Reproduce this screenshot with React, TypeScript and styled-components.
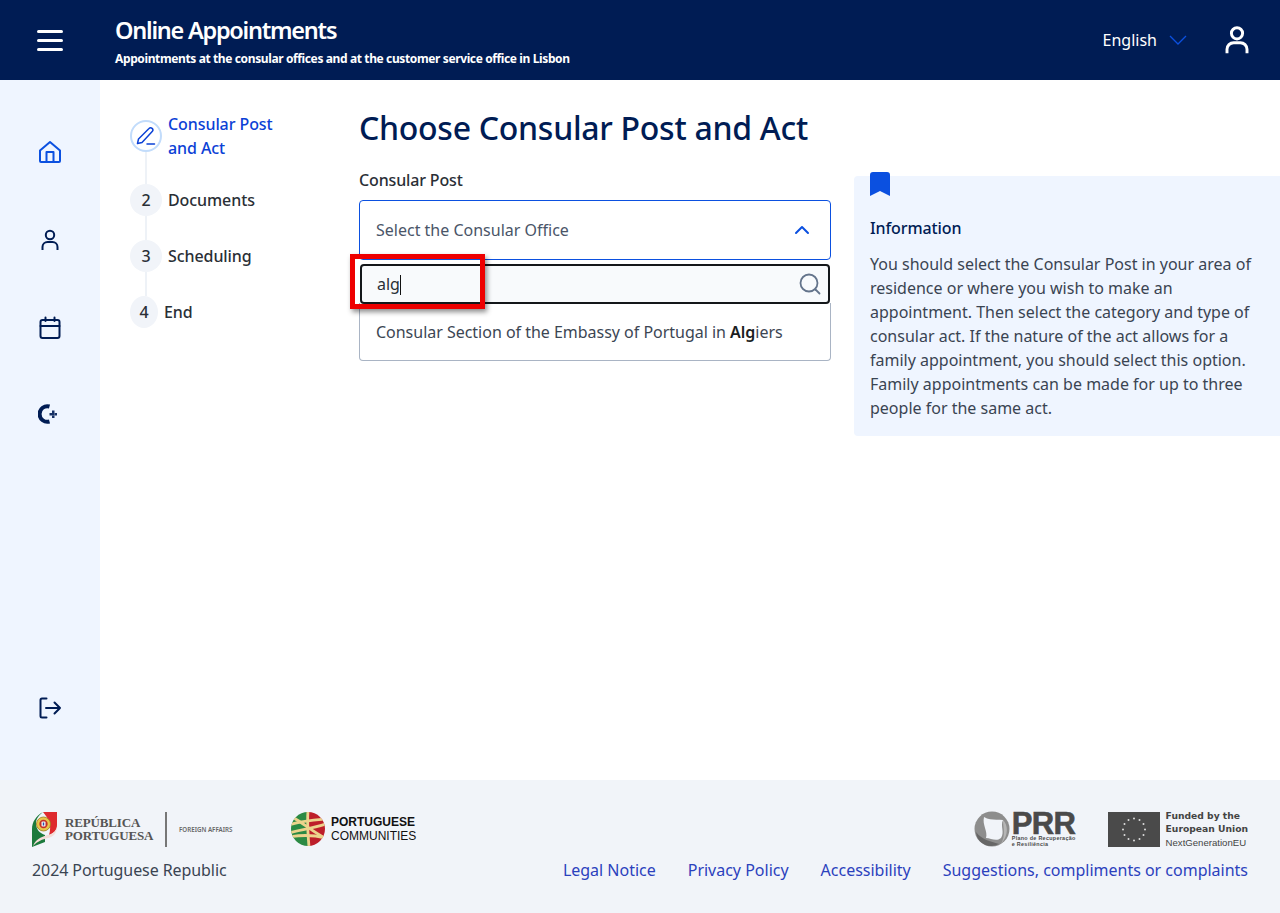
import React from 'react';
import styled, { createGlobalStyle } from 'styled-components';

const GlobalStyle = createGlobalStyle`
	html, body {
		margin: 0;
		padding: 0;
		background: #fff;
	}
	body {
		font-family: 'Noto Sans', 'Open Sans', sans-serif;
		font-size: 16px;
		color: #2a2f36;
	}
	* {
		box-sizing: border-box;
	}
`;

const Page = styled.div`
	display: flex;
	flex-direction: column;
	width: 1280px;
	height: 913px;
	overflow: hidden;
`;

const Header = styled.header`
	display: flex;
	align-items: center;
	height: 80px;
	flex: none;
	background: #001c54;
	color: #fff;
	padding: 0 27px 0 37px;
`;

const MenuButton = styled.div`
	display: flex;
	flex-direction: column;
	gap: 6px;
	width: 26px;
	margin-right: 52px;
	span {
		display: block;
		height: 3px;
		border-radius: 2px;
		background: #fff;
	}
`;

const HeaderTitles = styled.div`
	display: flex;
	flex-direction: column;
	flex: 1;
`;

const AppTitle = styled.div`
	font-size: 23.5px;
	line-height: 32px;
	font-weight: 600;
	letter-spacing: -1.25px;
`;

const AppSubtitle = styled.div`
	font-size: 12px;
	line-height: 16px;
	font-weight: 700;
	margin-top: 5px;
	letter-spacing: -0.38px;
`;

const Language = styled.div`
	display: flex;
	align-items: center;
	gap: 12px;
	font-size: 16px;
	margin-right: 34px;
`;

const Body = styled.div`
	display: flex;
	height: 700px;
	flex: none;
`;

const Sidebar = styled.nav`
	display: flex;
	flex-direction: column;
	align-items: center;
	width: 100px;
	flex: none;
	background: #eff5ff;
	padding: 60px 0 60px;
	color: #001c54;
`;

const SideIcon = styled.div<{ $gap?: number; $active?: boolean }>`
	display: flex;
	align-items: center;
	justify-content: center;
	height: 24px;
	width: 24px;
	margin-top: ${(p) => p.$gap ?? 0}px;
	color: ${(p) => (p.$active ? '#0b50e0' : '#001c54')};
`;

const SideSpacer = styled.div`
	flex: 1;
`;

const Stepper = styled.ol`
	display: flex;
	flex-direction: column;
	list-style: none;
	width: 259px;
	flex: none;
	margin: 0;
	padding: 40px 0 0 30px;
`;

const Step = styled.li<{ $last?: boolean }>`
	display: flex;
	gap: 6px;
	height: ${(p) => (p.$last ? 32 : 56)}px;
	position: relative;
	font-weight: 500;
	line-height: 24px;
	letter-spacing: -0.08px;
	color: #2a2f36;
	${(p) =>
		!p.$last &&
		`&::after {
			content: '';
			position: absolute;
			left: 15px;
			top: 32px;
			bottom: 0;
			width: 2px;
			background: #eef2f7;
		}`}
`;

const StepFirst = styled(Step)`
	height: 64px;
	color: #0b41d6;
`;

const StepCircle = styled.div<{ $narrow?: boolean; $active?: boolean }>`
	display: flex;
	align-items: center;
	justify-content: center;
	flex: none;
	width: ${(p) => (p.$narrow ? 28 : 32)}px;
	height: 32px;
	border-radius: 50%;
	background: ${(p) => (p.$active ? '#fff' : '#f1f4f9')};
	border: ${(p) => (p.$active ? '2px solid #c2dcfb' : 'none')};
	color: #2a2f36;
`;

const StepLabel = styled.div<{ $first?: boolean }>`
	padding-top: ${(p) => (p.$first ? 0 : 4)}px;
	margin-top: ${(p) => (p.$first ? -8 : 0)}px;
`;

const Main = styled.main`
	width: 495px;
	flex: none;
	padding-top: 24px;
	position: relative;
`;

const Title = styled.h1`
	margin: 0;
	font-size: 32px;
	line-height: 48px;
	font-weight: 500;
	color: #001c54;
	letter-spacing: -0.28px;
	white-space: nowrap;
`;

const FieldLabel = styled.div`
	font-weight: 500;
	line-height: 24px;
	margin-top: 16px;
	margin-bottom: 8px;
	color: #2a2f36;
	letter-spacing: -0.15px;
`;

const Field = styled.div`
	position: relative;
	width: 472px;
`;

const SelectBox = styled.div`
	display: flex;
	align-items: center;
	justify-content: space-between;
	height: 60px;
	border: 1px solid #0b50e0;
	border-radius: 4px;
	padding: 0 20px 0 16px;
	color: #4a5568;
`;

const SearchBox = styled.div`
	display: flex;
	align-items: center;
	justify-content: space-between;
	height: 40px;
	margin: 4px 1px 0;
	border: 2px solid #14171a;
	border-radius: 4px;
	background: #f8fafc;
	padding: 0 7px 0 15px;
	color: #2a2f36;
	position: relative;
	z-index: 1;
`;

const Caret = styled.span`
	display: inline-block;
	width: 1px;
	height: 20px;
	background: #111;
	vertical-align: middle;
`;

const ResultList = styled.div`
	height: 58px;
	margin-top: -1px;
	display: flex;
	align-items: center;
	border: 1px solid #a9b4c4;
	border-top: none;
	border-radius: 0 0 4px 4px;
	padding: 0 16px;
	color: #3c4653;
	white-space: nowrap;
	letter-spacing: -0.02px;
	b {
		font-weight: 600;
		color: #1a1d21;
	}
`;

const Highlight = styled.div`
	position: absolute;
	left: -9px;
	top: 54px;
	width: 135px;
	height: 55px;
	border: 5px solid #ee0000;
	box-shadow: 2px 3px 5px rgba(0, 0, 0, 0.45);
	z-index: 2;
`;

const InfoPanel = styled.aside`
	position: relative;
	width: 426px;
	height: 260px;
	flex: none;
	margin-top: 96px;
	background: #eff5ff;
	border-radius: 4px 0 0 4px;
	padding: 40px 16px 0;
`;

const Bookmark = styled.div`
	position: absolute;
	left: 16px;
	top: -4px;
	line-height: 0;
`;

const InfoTitle = styled.div`
	font-weight: 500;
	line-height: 24px;
	color: #001c54;
	margin-bottom: 12px;
	letter-spacing: -0.1px;
`;

const InfoText = styled.p`
	margin: 0;
	line-height: 24px;
	color: #3a4452;
`;

const Footer = styled.footer`
	flex: 1;
	background: #f1f4f9;
	padding: 30px 32px 0;
	display: flex;
	flex-direction: column;
`;

const LogoRow = styled.div`
	display: flex;
	align-items: center;
	height: 38px;
`;

const RepublicLogo = styled.div`
	display: flex;
	align-items: center;
	width: 258px;
	flex: none;
`;

const RepublicName = styled.div`
	font-family: 'Liberation Serif', serif;
	font-weight: 700;
	font-size: 13px;
	line-height: 13px;
	color: #555;
	margin-left: 7px;
	width: 88px;
	letter-spacing: -0.15px;
	white-space: nowrap;
`;

const LogoDivider = styled.div`
	width: 2px;
	height: 35px;
	background: #777;
	margin: 0 12px 0 12px;
`;

const Ministry = styled.div`
	font-size: 6.2px;
	font-weight: 600;
	color: #666;
	white-space: nowrap;
`;

const CommunitiesLogo = styled.div`
	display: flex;
	align-items: center;
	gap: 5px;
`;

const CommunitiesText = styled.div`
	font-family: 'Liberation Sans', Arial, sans-serif;
	font-size: 12px;
	line-height: 14px;
	color: #111;
	b {
		display: block;
		font-weight: 700;
	}
`;

const RightLogos = styled.div`
	display: flex;
	align-items: center;
	margin-left: auto;
	gap: 32px;
`;

const PrrLogo = styled.div`
	display: flex;
	align-items: center;
	gap: 2px;
`;

const PrrText = styled.div`
	font-family: 'Liberation Sans', Arial, sans-serif;
	color: #4a4a4a;
	font-size: 5.4px;
	line-height: 6px;
	font-weight: 700;
	letter-spacing: 0.3px;
	white-space: nowrap;
	b {
		display: block;
		font-size: 31px;
		line-height: 23px;
		letter-spacing: -0.6px;
		font-weight: 700;
		-webkit-text-stroke: 0.6px #4a4a4a;
	}
`;

const EuLogo = styled.div`
	display: flex;
	align-items: center;
	gap: 6px;
`;

const EuText = styled.div`
	font-family: 'DejaVu Sans', sans-serif;
	font-size: 9.2px;
	line-height: 13.5px;
	font-weight: 700;
	color: #444;
	white-space: nowrap;
	span {
		display: block;
		font-family: 'Liberation Sans', Arial, sans-serif;
		font-weight: 400;
		font-size: 9.6px;
	}
`;

const BottomRow = styled.div`
	display: flex;
	align-items: center;
	justify-content: space-between;
	margin-top: 10px;
	line-height: 24px;
`;

const Copyright = styled.div`
	color: #3a4452;
	letter-spacing: -0.08px;
`;

const Links = styled.div`
	display: flex;
	gap: 32px;
	letter-spacing: -0.01px;
	a {
		color: #2b41bd;
		text-decoration: none;
	}
`;

const stroke = {
	fill: 'none',
	stroke: 'currentColor',
	strokeWidth: 2,
	strokeLinecap: 'round' as const,
	strokeLinejoin: 'round' as const,
};

const HomeIcon = () => (
	<svg width='24' height='24' viewBox='0 0 24 24' {...stroke}>
		<path d='M2 10.5 12 2l10 8.5V21a1 1 0 0 1-1 1H3a1 1 0 0 1-1-1z' />
		<path d='M8.5 22V12h7v10' />
	</svg>
);

const UserIcon = ({ size = 24, width = 2 }: { size?: number; width?: number }) => (
	<svg width={size} height={size} viewBox='0 0 24 24' {...stroke} strokeWidth={width} strokeLinecap='butt'>
		<circle cx='12' cy='7' r='4.2' />
		<path d='M4.5 22v-3a5 5 0 0 1 5-5h5a5 5 0 0 1 5 5v3' />
	</svg>
);

const CalendarIcon = () => (
	<svg width='24' height='24' viewBox='0 0 24 24' {...stroke}>
		<rect x='2.5' y='4' width='19' height='18' rx='2' />
		<path d='M2.5 10h19M7.5 1.5V5M16.5 1.5V5' />
	</svg>
);

const MoonIcon = () => (
	<svg width='24' height='24' viewBox='0 0 24 24'>
		<path d='M11.500 4.500A7.800 7.800 0 1 0 11.500 19.500' fill='none' stroke='currentColor' strokeWidth='4' />
		<g fill='currentColor' opacity='0.9'>
			<rect x='14' y='8.500' width='2.500' height='2.500' />
			<rect x='14' y='13.500' width='2.500' height='2.500' />
			<rect x='11.500' y='11' width='2.500' height='2.500' />
			<rect x='14' y='11' width='2.500' height='2.500' />
			<rect x='16.500' y='11' width='2.500' height='2.500' />
		</g>
	</svg>
);

const LogoutIcon = () => (
	<svg width='24' height='24' viewBox='0 0 24 24' {...stroke}>
		<path d='M8.500 2.500H4a1.500 1.500 0 0 0-1.500 1.500v16A1.500 1.500 0 0 0 4 21.500h4.500' />
		<path d='M8 12h14M16.500 6.500 22 12l-5.500 5.500' />
	</svg>
);

const PencilIcon = () => (
	<svg width='20' height='20' viewBox='0 0 20 20' fill='none' stroke='#0b41d6' strokeWidth='1.500' strokeLinecap='round' strokeLinejoin='round'>
		<path d='M1.500 17.500 2.500 13 13 2.500a2 2 0 0 1 3.200 3L6 16.500z' />
		<path d='M11 18h7.500' />
	</svg>
);

const ChevronDown = () => (
	<svg width='18' height='10' viewBox='0 0 18 10' fill='none' stroke='#0b50e0' strokeWidth='1.300'>
		<path d='M1 1l8 8 8-8' />
	</svg>
);

const ChevronUp = () => (
	<svg width='16' height='10' viewBox='0 0 16 10' fill='none' stroke='#0b50e0' strokeWidth='2' strokeLinecap='round' strokeLinejoin='round'>
		<path d='M2 8l6-6 6 6' />
	</svg>
);

const SearchIcon = () => (
	<svg width='22' height='22' viewBox='0 0 22 22' fill='none' stroke='#64748b' strokeWidth='1.800' strokeLinecap='round'>
		<circle cx='10' cy='10' r='8.500' />
		<path d='M16.500 16.500 20.500 20.500' />
	</svg>
);

const BookmarkIcon = () => (
	<svg width='20' height='24' viewBox='0 0 20 24'>
		<path d='M0 3a3 3 0 0 1 3-3h14a3 3 0 0 1 3 3v21l-10-5-10 5z' fill='#0b50e0' />
	</svg>
);

const FlagMark = () => (
	<svg width='26' height='36' viewBox='0 0 26 36'>
		<path d='M11 1 C4 5 0 11 0 18 V36 L13 31 V24 C8 22 4 19 4 12 C4 8 7 4 11 1z' fill='#1c7a3d' />
		<path d='M11 1 H25 V14 C25 19 22 22 17 24 C20 15 17 8 11 1z' fill='#de2a2e' />
		<path d='M1 35 C4 27 12 25 18 23.500 C21 22.500 24 20 25 16 C25 22 21 26 16 27 C10 28.500 6 30 1 35z' fill='#f3dcd7' />
		<circle cx='11.500' cy='13' r='7' fill='#e8c64a' stroke='#9c7a1c' strokeWidth='0.800' />
		<circle cx='11.500' cy='13' r='4.200' fill='#c43028' />
		<rect x='9.500' y='10.500' width='4' height='5' rx='1' fill='#f5f5f5' />
		<rect x='10.800' y='11.500' width='1.400' height='3' fill='#2a4fa8' />
	</svg>
);

const CommunitiesMark = () => (
	<svg width='36' height='36' viewBox='0 0 36 36'>
		<defs>
			<clipPath id='globe'>
				<circle cx='18' cy='18' r='17' />
			</clipPath>
		</defs>
		<g clipPath='url(#globe)'>
			<rect width='19' height='36' fill='#2b8a44' />
			<rect x='19' width='17' height='36' fill='#bd1e2a' />
			<g fill='none' stroke='#ecd38c' strokeWidth='2.800'>
				<path d='M-1 14 C10 10 24 9 36 8' />
				<path d='M-1 22 C10 19 24 17 36 13' />
				<path d='M-1 26 C10 24 24 24 36 27' />
				<path d='M4 7 C14 13 26 23 35 27' />
				<path d='M18 0 C17 12 18 24 19 36' />
			</g>
		</g>
	</svg>
);

const PrrMark = () => (
	<svg width='36' height='36' viewBox='0 0 36 36'>
		<circle cx='18' cy='18' r='17.500' fill='#8d8d8d' />
		<path d='M10 6 C16 10 22 8 29 9 C26 15 31 21 27 27 C22 31 17 27 12 27 C14 20 8 14 10 6z' fill='#f1f4f9' />
		<path d='M2 21 C8 29 16 30 25 33 C15 38 3 33 2 21z' fill='#666' />
		<path d='M29 9 C34 14 35 24 27 33 C32 24 29 16 29 9z' fill='#b5b5b5' />
	</svg>
);

const EuFlag = () => {
	const stars = Array.from({ length: 12 }, (_, i) => {
		const a = (i * Math.PI) / 6;
		return { x: 26 + 11 * Math.cos(a), y: 17.500 + 11 * Math.sin(a) };
	});
	return (
		<svg width='52' height='35' viewBox='0 0 52 35'>
			<rect width='52' height='35' fill='#4a4a4a' />
			{stars.map((s, i) => (
				<circle key={i} cx={s.x} cy={s.y} r='1' fill='#ddd' />
			))}
		</svg>
	);
};

export default function App() {
	return (
		<Page>
			<GlobalStyle />
			<Header>
				<MenuButton>
					<span />
					<span />
					<span />
				</MenuButton>
				<HeaderTitles>
					<AppTitle>Online Appointments</AppTitle>
					<AppSubtitle>
						Appointments at the consular offices and at the customer service office in Lisbon
					</AppSubtitle>
				</HeaderTitles>
				<Language>
					English
					<ChevronDown />
				</Language>
				<UserIcon size={32} width={2.200} />
			</Header>
			<Body>
				<Sidebar>
					<SideIcon $active>
						<HomeIcon />
					</SideIcon>
					<SideIcon $gap={64}>
						<UserIcon />
					</SideIcon>
					<SideIcon $gap={64}>
						<CalendarIcon />
					</SideIcon>
					<SideIcon $gap={62}>
						<MoonIcon />
					</SideIcon>
					<SideSpacer />
					<SideIcon>
						<LogoutIcon />
					</SideIcon>
				</Sidebar>
				<Stepper>
					<StepFirst>
						<StepCircle $active>
							<PencilIcon />
						</StepCircle>
						<StepLabel $first>
							Consular Post
							<br />
							and Act
						</StepLabel>
					</StepFirst>
					<Step>
						<StepCircle>2</StepCircle>
						<StepLabel>Documents</StepLabel>
					</Step>
					<Step>
						<StepCircle>3</StepCircle>
						<StepLabel>Scheduling</StepLabel>
					</Step>
					<Step $last>
						<StepCircle $narrow>4</StepCircle>
						<StepLabel>End</StepLabel>
					</Step>
				</Stepper>
				<Main>
					<Title>Choose Consular Post and Act</Title>
					<FieldLabel>Consular Post</FieldLabel>
					<Field>
						<SelectBox>
							Select the Consular Office
							<ChevronUp />
						</SelectBox>
						<SearchBox>
							<span>
								alg
								<Caret />
							</span>
							<SearchIcon />
						</SearchBox>
						<ResultList>
							<span>
								Consular Section of the Embassy of Portugal in <b>Alg</b>iers
							</span>
						</ResultList>
						<Highlight />
					</Field>
				</Main>
				<InfoPanel>
					<Bookmark>
						<BookmarkIcon />
					</Bookmark>
					<InfoTitle>Information</InfoTitle>
					<InfoText>
						You should select the Consular Post in your area of residence or where you wish to make an
						appointment. Then select the category and type of consular act. If the nature of the act
						allows for a family appointment, you should select this option. Family appointments can be
						made for up to three people for the same act.
					</InfoText>
				</InfoPanel>
			</Body>
			<Footer>
				<LogoRow>
					<RepublicLogo>
						<FlagMark />
						<RepublicName>
							REPÚBLICA
							<br />
							PORTUGUESA
						</RepublicName>
						<LogoDivider />
						<Ministry>FOREIGN AFFAIRS</Ministry>
					</RepublicLogo>
					<CommunitiesLogo>
						<CommunitiesMark />
						<CommunitiesText>
							<b>PORTUGUESE</b>
							COMMUNITIES
						</CommunitiesText>
					</CommunitiesLogo>
					<RightLogos>
						<PrrLogo>
							<PrrMark />
							<PrrText>
								<b>PRR</b>
								Plano de Recuperação
								<br />e Resiliência
							</PrrText>
						</PrrLogo>
						<EuLogo>
							<EuFlag />
							<EuText>
								Funded by the
								<br />
								European Union
								<span>NextGenerationEU</span>
							</EuText>
						</EuLogo>
					</RightLogos>
				</LogoRow>
				<BottomRow>
					<Copyright>2024 Portuguese Republic</Copyright>
					<Links>
						<a href='#legal'>Legal Notice</a>
						<a href='#privacy'>Privacy Policy</a>
						<a href='#accessibility'>Accessibility</a>
						<a href='#suggestions'>Suggestions, compliments or complaints</a>
					</Links>
				</BottomRow>
			</Footer>
		</Page>
	);
}
